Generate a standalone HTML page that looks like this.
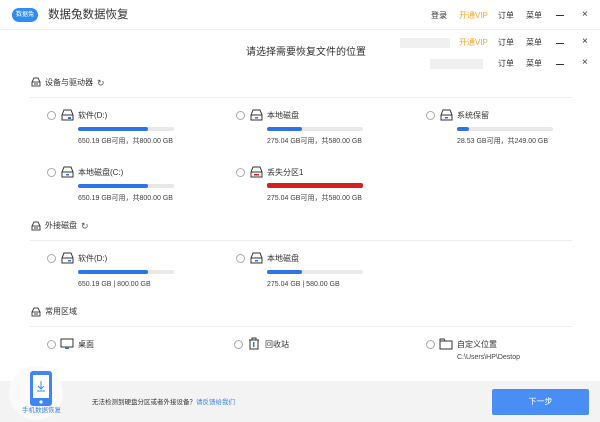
<!DOCTYPE html>
<html><head><meta charset="utf-8"><style>
*{margin:0;padding:0;box-sizing:border-box}
body{width:600px;height:422px;background:#fff;position:relative;overflow:hidden;font-family:"Liberation Sans","Noto Sans CJK SC",sans-serif;color:#333}
.a{position:absolute;white-space:nowrap}
.t{font-size:8px;color:#333;line-height:10px}
.s{font-size:7px;color:#444;line-height:9px}
.r{position:absolute;width:9px;height:9px;border:1px solid #aaa;border-radius:50%;background:#fff}
.bar{position:absolute;height:4px;width:96px;background:#e8e8e8;border-radius:2px}
.bar i{display:block;height:4px;border-radius:2px;background:#2f73e8}
.line{position:absolute;left:30px;width:542px;height:1px;background:#ececec}
.hd{position:absolute;font-size:8px;line-height:10px}
.mn{position:absolute;width:8px;height:1px;background:#333}
</style></head><body>
<div class="a" style="left:12px;top:8px;width:26px;height:14px;background:#2f8cf0;border-radius:7px;color:#fff;font-size:6px;line-height:14px;text-align:center">数据兔</div>
<div class="a" style="left:48px;top:8px;font-size:11.5px;color:#333;line-height:14px">数据兔数据恢复</div>
<div class="a" style="left:0;top:29px;width:600px;height:1px;background:#f0f0f0"></div>
<div class="hd a" style="left:431px;top:11px">登录</div>
<div class="hd a" style="left:459px;top:11px;color:#f5a623">开通VIP</div>
<div class="hd a" style="left:498px;top:11px">订单</div>
<div class="hd a" style="left:526px;top:11px">菜单</div>
<div class="mn" style="left:556px;top:15px"></div>
<div class="hd a" style="left:582px;top:10px;font-size:10px">×</div>
<div class="a" style="left:400px;top:38px;width:50px;height:10px;background:#f0f0f0"></div>
<div class="hd a" style="left:459px;top:38px;color:#f5a623">开通VIP</div>
<div class="hd a" style="left:498px;top:38px">订单</div>
<div class="hd a" style="left:526px;top:38px">菜单</div>
<div class="mn" style="left:556px;top:43px"></div>
<div class="hd a" style="left:582px;top:37px;font-size:10px">×</div>
<div class="a" style="left:430px;top:59px;width:53px;height:10px;background:#f0f0f0"></div>
<div class="hd a" style="left:498px;top:59px">订单</div>
<div class="hd a" style="left:526px;top:59px">菜单</div>
<div class="mn" style="left:556px;top:64px"></div>
<div class="hd a" style="left:582px;top:58px;font-size:10px">×</div>
<div class="a" style="left:246px;top:47px;font-size:10px;line-height:12px;color:#333">请选择需要恢复文件的位置</div>

<svg class="a" style="left:31px;top:77px" width="10" height="10" viewBox="0 0 10 10"><path d="M1 5L3 1H7L9 5V9H1Z M1 5H9 M3 7H7" fill="none" stroke="#444" stroke-width="1"/></svg>
<div class="a t" style="left:45px;top:78px">设备与驱动器</div>
<div class="a" style="left:97px;top:78px;font-size:9px;line-height:10px;color:#555">↻</div>
<div class="line" style="top:97px"></div>

<svg class="a" style="left:31px;top:221px" width="10" height="10" viewBox="0 0 10 10"><path d="M1 5L3 1H7L9 5V9H1Z M1 5H9 M3 7H7" fill="none" stroke="#444" stroke-width="1"/></svg>
<div class="a t" style="left:45px;top:221px">外接磁盘</div>
<div class="a" style="left:81px;top:221px;font-size:9px;line-height:10px;color:#555">↻</div>
<div class="line" style="top:240px"></div>

<svg class="a" style="left:31px;top:307px" width="10" height="10" viewBox="0 0 10 10"><path d="M1 5L3 1H7L9 5V9H1Z M1 5H9 M3 7H7" fill="none" stroke="#444" stroke-width="1"/></svg>
<div class="a t" style="left:45px;top:307px">常用区域</div>
<div class="line" style="top:326px"></div>

<div class="r" style="left:47px;top:111px"></div>
<svg class="a" style="left:61px;top:109px" width="13" height="12" viewBox="0 0 13 12"><path d="M1 6L3 1H10L12 6V11H1Z M1 6H12" fill="none" stroke="#333"/><rect x="7" y="8" width="3" height="2" fill="#2f73e8"/></svg>
<div class="a t" style="left:78px;top:111px">软件(D:)</div>
<div class="bar" style="left:78px;top:127px"><i style="width:70px"></i></div>
<div class="a s" style="left:78px;top:137px">650.19 GB可用，共800.00 GB</div>
<div class="r" style="left:236px;top:111px"></div>
<svg class="a" style="left:250px;top:109px" width="13" height="12" viewBox="0 0 13 12"><path d="M1 6L3 1H10L12 6V11H1Z M1 6H12" fill="none" stroke="#333"/><rect x="5" y="8" width="3" height="1.5" fill="#2f73e8"/></svg>
<div class="a t" style="left:267px;top:111px">本地磁盘</div>
<div class="bar" style="left:267px;top:127px"><i style="width:35px"></i></div>
<div class="a s" style="left:267px;top:137px">275.04 GB可用，共580.00 GB</div>
<div class="r" style="left:426px;top:111px"></div>
<svg class="a" style="left:440px;top:109px" width="13" height="12" viewBox="0 0 13 12"><path d="M1 6L3 1H10L12 6V11H1Z M1 6H12" fill="none" stroke="#333"/><rect x="5" y="8" width="3" height="1.5" fill="#2f73e8"/></svg>
<div class="a t" style="left:457px;top:111px">系统保留</div>
<div class="bar" style="left:457px;top:127px"><i style="width:12px"></i></div>
<div class="a s" style="left:457px;top:137px">28.53 GB可用，共249.00 GB</div>
<div class="r" style="left:47px;top:168px"></div>
<svg class="a" style="left:61px;top:166px" width="13" height="12" viewBox="0 0 13 12"><path d="M1 6L3 1H10L12 6V11H1Z M1 6H12" fill="none" stroke="#333"/><rect x="5" y="8" width="3" height="1.5" fill="#2f73e8"/></svg>
<div class="a t" style="left:78px;top:168px">本地磁盘(C:)</div>
<div class="bar" style="left:78px;top:184px"><i style="width:70px"></i></div>
<div class="a s" style="left:78px;top:194px">650.19 GB可用，共800.00 GB</div>
<div class="r" style="left:236px;top:168px"></div>
<svg class="a" style="left:250px;top:166px" width="13" height="12" viewBox="0 0 13 12"><path d="M1 6L3 1H10L12 6V11H1Z M1 6H12" fill="none" stroke="#333"/><rect x="4" y="8" width="5" height="1.5" fill="#d81e1e"/></svg>
<div class="a t" style="left:267px;top:168px">丢失分区1</div>
<div class="bar" style="left:267px;top:183px;height:5px"><i style="width:96px;height:5px;background:#d81e1e"></i></div>
<div class="a s" style="left:267px;top:194px">275.04 GB可用，共580.00 GB</div>
<div class="r" style="left:47px;top:254px"></div>
<svg class="a" style="left:61px;top:252px" width="13" height="12" viewBox="0 0 13 12"><path d="M1 6L3 1H10L12 6V11H1Z M1 6H12" fill="none" stroke="#333"/><rect x="7" y="8" width="3" height="1.5" fill="#2f73e8"/></svg>
<div class="a t" style="left:78px;top:254px">软件(D:)</div>
<div class="bar" style="left:78px;top:270px"><i style="width:70px"></i></div>
<div class="a s" style="left:78px;top:280px">650.19 GB | 800.00 GB</div>
<div class="r" style="left:236px;top:254px"></div>
<svg class="a" style="left:250px;top:252px" width="13" height="12" viewBox="0 0 13 12"><path d="M1 6L3 1H10L12 6V11H1Z M1 6H12" fill="none" stroke="#333"/><rect x="5" y="8" width="3" height="1.5" fill="#2f73e8"/></svg>
<div class="a t" style="left:267px;top:254px">本地磁盘</div>
<div class="bar" style="left:267px;top:270px"><i style="width:35px"></i></div>
<div class="a s" style="left:267px;top:280px">275.04 GB | 580.00 GB</div>
<div class="r" style="left:47px;top:340px"></div>
<svg class="a" style="left:60px;top:338px" width="14" height="12" viewBox="0 0 14 12"><rect x="1" y="1" width="12" height="8" fill="none" stroke="#333"/><rect x="5" y="9" width="4" height="2" fill="#2f73e8"/></svg>
<div class="a t" style="left:78px;top:340px">桌面</div>
<div class="r" style="left:234px;top:340px"></div>
<svg class="a" style="left:248px;top:337px" width="12" height="13" viewBox="0 0 12 13"><path d="M1 3H11 M4 3V1H8V3 M2 3V12H10V3" fill="none" stroke="#333"/><rect x="5" y="5" width="1.5" height="5" fill="#2f73e8"/></svg>
<div class="a t" style="left:265px;top:340px">回收站</div>
<div class="r" style="left:426px;top:340px"></div>
<svg class="a" style="left:439px;top:338px" width="14" height="12" viewBox="0 0 14 12"><path d="M1 1H5L6 3H13V11H1Z M1 3H6" fill="none" stroke="#333"/></svg>
<div class="a t" style="left:457px;top:340px">自定义位置</div>
<div class="a s" style="left:457px;top:353px">C:\Users\HP\Destop</div>

<div class="a" style="left:0;top:381px;width:600px;height:41px;background:#f3f3f3"></div>
<div class="a" style="left:9px;top:366px;width:54px;height:54px;border-radius:50%;background:#fafafa"></div>
<svg class="a" style="left:30px;top:371px" width="22" height="35" viewBox="0 0 22 35"><rect x="0" y="0" width="22" height="35" rx="3" fill="#3d86f3"/><rect x="3" y="4" width="16" height="23" fill="#fff"/><circle cx="11" cy="31" r="1.6" fill="#fff"/><path d="M11 10V18 M8 15L11 18L14 15 M7 20H15" stroke="#3d86f3" stroke-width="1" fill="none"/></svg>
<div class="a" style="left:22px;top:407px;font-size:6.5px;color:#3d86f3;line-height:8px">手机数据恢复</div>
<div class="a" style="left:92px;top:398px;font-size:6.5px;line-height:9px;color:#333">无法检测到硬盘分区或者外接设备？<span style="color:#3d86f3">请反馈给我们</span></div>
<div class="a" style="left:492px;top:389px;width:97px;height:26px;background:#4a8ef5;border-radius:2px;color:#fff;font-size:8px;line-height:26px;text-align:center">下一步</div>
</body></html>
